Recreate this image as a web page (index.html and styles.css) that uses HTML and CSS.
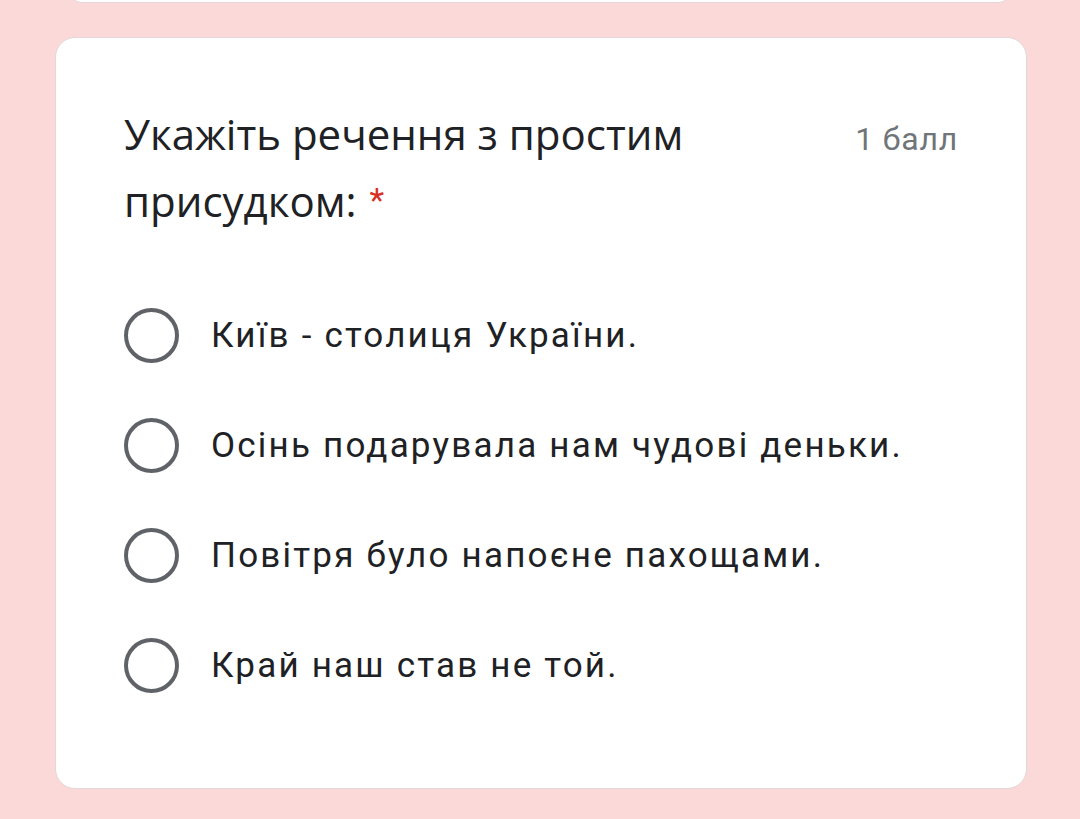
FILE: index.html
```html
<!DOCTYPE html>
<html lang="uk">
<head>
<meta charset="utf-8">
<link rel="stylesheet" href="styles.css">
</head>
<body>
<div class="page">
  <div class="prev-card"></div>
  <div class="card">
    <div class="header">
      <div class="title">Укажіть речення з простим присудком:<span class="req">*</span></div>
      <div class="points">1 балл</div>
    </div>
    <div class="options">
      <label class="option"><span class="radio"></span><span class="text">Київ - столиця України.</span></label>
      <label class="option"><span class="radio"></span><span class="text">Осінь подарувала нам чудові деньки.</span></label>
      <label class="option"><span class="radio"></span><span class="text">Повітря було напоєне пахощами.</span></label>
      <label class="option"><span class="radio"></span><span class="text">Край наш став не той.</span></label>
    </div>
  </div>
</div>
</body>
</html>
```
FILE: styles.css
```css
html, body {
  margin: 0;
  padding: 0;
  background: #fcd9d9;
}
.page {
  width: 1080px;
  height: 819px;
  overflow: hidden;
  display: flex;
  flex-direction: column;
}
.prev-card {
  width: 944px;
  height: 20px;
  margin-top: -17px;
  margin-left: 68px;
  background: #fff;
  border: 1.5px solid #e2d6d6;
  border-top: none;
  border-radius: 0 0 14px 14px;
  box-sizing: border-box;
}
.card {
  margin-top: 34px;
  margin-left: 55px;
  width: 972px;
  height: 752px;
  box-sizing: border-box;
  background: #fff;
  border: 1.5px solid #e2d6d6;
  border-radius: 20px;
  padding: 63px 68px 0 68px;
}
.header {
  display: flex;
  justify-content: space-between;
  align-items: flex-start;
}
.title {
  font-family: "Open Sans", sans-serif;
  font-size: 42px;
  line-height: 66px;
  color: #202124;
  width: 620px;
}
.req {
  margin-left: 13px;
  font-family: Roboto, sans-serif;
  font-size: 34px;
  vertical-align: 5px;
  color: #d93025;
}
.points {
  font-family: Roboto, sans-serif;
  font-size: 32px;
  letter-spacing: 0.8px;
  line-height: 40px;
  color: #70757a;
  margin-top: 18px;
}
.options {
  display: flex;
  flex-direction: column;
  margin-top: 46px;
}
.option {
  display: flex;
  align-items: center;
  height: 110px;
}
.radio {
  width: 55px;
  height: 55px;
  box-sizing: border-box;
  border: 4.5px solid #5f6368;
  border-radius: 50%;
  flex: none;
}
.text {
  margin-left: 32px;
  font-family: Roboto, sans-serif;
  font-size: 35px;
  letter-spacing: 2.2px;
  color: #202124;
}
```
